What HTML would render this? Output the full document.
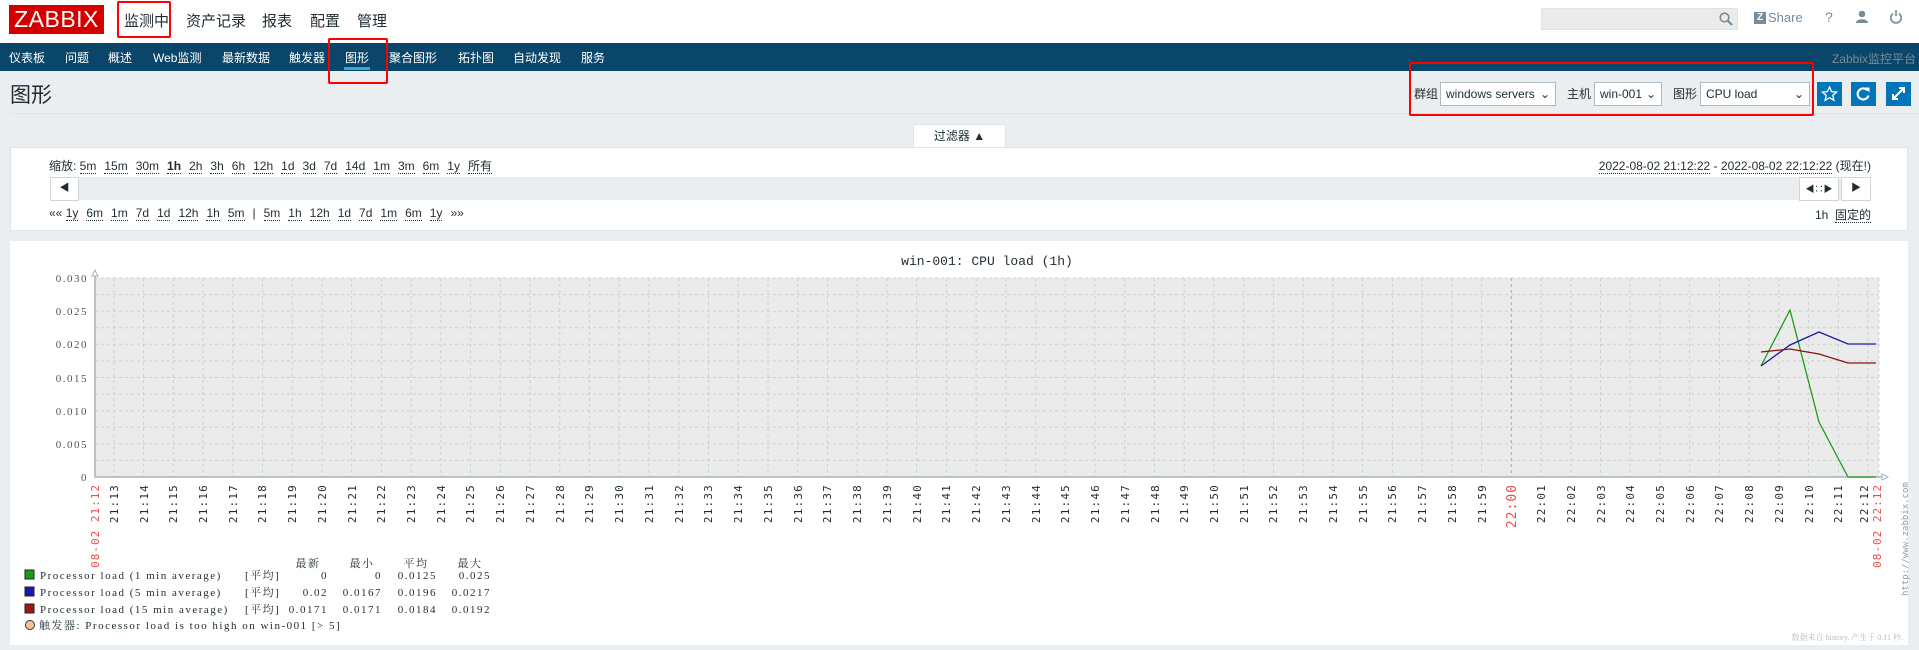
<!DOCTYPE html>
<html><head><meta charset="utf-8">
<style>
*{box-sizing:border-box;margin:0;padding:0}
body{width:1919px;height:650px;overflow:hidden;background:#ebeef0;font-family:"Liberation Sans","Noto Sans CJK SC",sans-serif;font-size:12px;color:#1f2c33;position:relative}
.abs{position:absolute}
#top{left:0;top:0;width:1919px;height:43px;background:#fff}
#logo{left:9px;top:5px;width:95px;height:29px;background:#d40000;color:#fff;font-size:23px;line-height:29px;text-align:center;letter-spacing:0.5px}
.mm{top:10px;font-size:15px;color:#1f2c33}
#nav{left:0;top:43px;width:1919px;height:28px;background:#0a466a}
.sn{top:49px;color:#fff;font-size:12px}
.red{border:2px solid #f00;border-radius:2px}
.sel{border:1px solid #acbbc2;background:#fff;height:24px;font-size:12px;line-height:22px;padding-left:5px}
.btn{width:25px;height:24px;background:#0275b8;top:82px}
.lnk{border-bottom:1px dotted #1f2c33}
.fr span{margin-right:8px}
</style></head><body>
<div id="top" class="abs"></div>
<div id="logo" class="abs">ZABBIX</div>
<div class="abs mm" style="left:124px">监测中</div>
<div class="abs mm" style="left:186px">资产记录</div>
<div class="abs mm" style="left:262px">报表</div>
<div class="abs mm" style="left:310px">配置</div>
<div class="abs mm" style="left:357px">管理</div>
<div class="abs red" style="left:117px;top:1px;width:54px;height:37px"></div>
<div class="abs" style="left:1541px;top:8px;width:197px;height:22px;background:#ebebeb;border:1px solid #dfe4e7"></div>
<svg class="abs" style="left:1719px;top:12px" width="14" height="14"><circle cx="5.5" cy="5.5" r="4.3" fill="none" stroke="#768d99" stroke-width="1.6"/><path d="M8.5 8.5l4.5 4.5" stroke="#768d99" stroke-width="2"/></svg>
<div class="abs" style="left:1754px;top:12px;width:12px;height:12px;background:#768d99;color:#fff;font-size:10px;font-weight:bold;line-height:12px;text-align:center">Z</div>
<div class="abs" style="left:1768px;top:10px;font-size:13px;color:#768d99">Share</div>
<div class="abs" style="left:1825px;top:9px;font-size:14px;color:#768d99">?</div>
<svg class="abs" style="left:1855px;top:10px" width="14" height="14"><circle cx="7" cy="4" r="3.3" fill="#768d99"/><path d="M1 13c0-5 12-5 12 0z" fill="#768d99"/></svg>
<svg class="abs" style="left:1889px;top:9px" width="14" height="15"><path d="M4 4.5a5.2 5.2 0 1 0 6 0" fill="none" stroke="#768d99" stroke-width="1.6"/><path d="M7 1v6" stroke="#768d99" stroke-width="1.6"/></svg>
<div id="nav" class="abs"></div>
<div class="abs sn" style="left:9px">仪表板</div>
<div class="abs sn" style="left:65px">问题</div>
<div class="abs sn" style="left:108px">概述</div>
<div class="abs sn" style="left:153px">Web监测</div>
<div class="abs sn" style="left:222px">最新数据</div>
<div class="abs sn" style="left:289px">触发器</div>
<div class="abs sn" style="left:345px">图形</div>
<div class="abs" style="left:344px;top:67px;width:26px;height:3px;background:#3ca5e0"></div>
<div class="abs sn" style="left:389px">聚合图形</div>
<div class="abs sn" style="left:458px">拓扑图</div>
<div class="abs sn" style="left:513px">自动发现</div>
<div class="abs sn" style="left:581px">服务</div>
<div class="abs red" style="left:328px;top:38px;width:60px;height:46px"></div>
<div class="abs" style="right:3px;top:50px;color:#768d99;font-size:12px">Zabbix监控平台</div>
<div class="abs" style="left:10px;top:79px;font-size:21px;color:#1f2c33">图形</div>
<div class="abs" style="left:10px;top:113px;width:1909px;height:1px;background:#dfe4e7"></div>
<div class="abs" style="left:1414px;top:85px">群组</div>
<div class="abs sel" style="left:1440px;top:82px;width:116px">windows servers <span style="float:right;margin-right:5px">⌄</span></div>
<div class="abs" style="left:1567px;top:85px">主机</div>
<div class="abs sel" style="left:1594px;top:82px;width:68px">win-001 <span style="float:right;margin-right:5px">⌄</span></div>
<div class="abs" style="left:1673px;top:85px">图形</div>
<div class="abs sel" style="left:1700px;top:82px;width:110px">CPU load <span style="float:right;margin-right:5px">⌄</span></div>
<div class="abs red" style="left:1409px;top:62px;width:405px;height:54px"></div>
<div class="abs btn" style="left:1817px"><svg width="25" height="24"><path d="M12.5 5l2.1 4.6 5 .5-3.8 3.3 1.1 4.9-4.4-2.6-4.4 2.6 1.1-4.9-3.8-3.3 5-.5z" fill="none" stroke="#fff" stroke-width="1.3"/></svg></div>
<div class="abs btn" style="left:1851px"><svg width="25" height="24"><path d="M16.5 8.5a5.5 5.5 0 1 0 1 5" fill="none" stroke="#fff" stroke-width="2.2"/><path d="M13.5 5.5h5v5z" fill="#fff"/></svg></div>
<div class="abs btn" style="left:1886px"><svg width="25" height="24"><path d="M7 17l11-11M13 6h5v5M7 12v5h5" fill="none" stroke="#fff" stroke-width="2"/></svg></div>
<div class="abs" style="left:913px;top:124px;width:93px;height:24px;background:#fff;border:1px solid #dfe4e7;border-bottom:none;text-align:center;line-height:22px">过滤器 ▲</div>
<div class="abs" style="left:10px;top:147px;width:1898px;height:84px;background:#fff;border:1px solid #dfe4e7"></div>
<div class="abs fr" style="left:49px;top:157px">缩放: <span class="lnk">5m</span><span class="lnk">15m</span><span class="lnk">30m</span><span class="lnk" style="font-weight:bold">1h</span><span class="lnk">2h</span><span class="lnk">3h</span><span class="lnk">6h</span><span class="lnk">12h</span><span class="lnk">1d</span><span class="lnk">3d</span><span class="lnk">7d</span><span class="lnk">14d</span><span class="lnk">1m</span><span class="lnk">3m</span><span class="lnk">6m</span><span class="lnk">1y</span><span class="lnk">所有</span></div>
<div class="abs" style="right:48px;top:157px"><span class="lnk">2022-08-02 21:12:22</span> - <span class="lnk">2022-08-02 22:12:22</span> (现在!)</div>
<div class="abs" style="left:50px;top:177px;width:1821px;height:23px;background:#ebeef0"></div>
<div class="abs" style="left:50px;top:177px;width:29px;height:24px;background:#fff;border:1px solid #cfd5d8;text-align:center;line-height:22px;font-size:10px">◀</div>
<div class="abs" style="left:1799px;top:177px;width:40px;height:24px;background:#fff;border:1px solid #cfd5d8;text-align:center;line-height:22px;font-size:9px">◀∷▶</div>
<div class="abs" style="left:1841px;top:177px;width:30px;height:24px;background:#fff;border:1px solid #cfd5d8;text-align:center;line-height:22px;font-size:10px">▶</div>
<div class="abs fr" style="left:49px;top:206px">«« <span class="lnk">1y</span><span class="lnk">6m</span><span class="lnk">1m</span><span class="lnk">7d</span><span class="lnk">1d</span><span class="lnk">12h</span><span class="lnk">1h</span><span class="lnk">5m</span><span>|</span><span class="lnk">5m</span><span class="lnk">1h</span><span class="lnk">12h</span><span class="lnk">1d</span><span class="lnk">7d</span><span class="lnk">1m</span><span class="lnk">6m</span><span class="lnk">1y</span>»»</div>
<div class="abs" style="right:48px;top:206px">1h &nbsp;<span class="lnk">固定的</span></div>
<div class="abs" style="left:10px;top:241px;width:1898px;height:404px;background:#fff"></div>
<svg class="abs" style="left:0;top:0" width="1919" height="650" font-family="'DejaVu Sans Mono',monospace">
<text x="987" y="265" text-anchor="middle" font-size="13" fill="#1f2c33" font-family="'Liberation Mono',monospace">win-001: CPU load (1h)</text>
<rect x="95" y="278" width="1784" height="199" fill="#ebebeb"/>
<g stroke="#c9d1d6" stroke-dasharray="3,3" stroke-width="1">
<path d="M95 278H1879M95 294.6H1879M95 311.2H1879M95 327.7H1879M95 344.3H1879M95 360.9H1879M95 377.5H1879M95 394.1H1879M95 410.7H1879M95 427.2H1879M95 443.8H1879M95 460.4H1879"/>
<path d="M113.8 278V477M143.6 278V477M173.3 278V477M203 278V477M232.8 278V477M262.5 278V477M292.2 278V477M322 278V477M351.7 278V477M381.4 278V477M411.2 278V477M440.9 278V477M470.6 278V477M500.4 278V477M530.1 278V477M559.8 278V477M589.6 278V477M619.3 278V477M649 278V477M678.8 278V477M708.5 278V477M738.2 278V477M768 278V477M797.7 278V477M827.4 278V477M857.2 278V477M886.9 278V477M916.6 278V477M946.4 278V477M976.1 278V477M1005.8 278V477M1035.6 278V477M1065.3 278V477M1095 278V477M1124.8 278V477M1154.5 278V477M1184.2 278V477M1214 278V477M1243.7 278V477M1273.4 278V477M1303.2 278V477M1332.9 278V477M1362.6 278V477M1392.4 278V477M1422.1 278V477M1451.8 278V477M1481.6 278V477M1541 278V477M1570.8 278V477M1600.5 278V477M1630.2 278V477M1660 278V477M1689.7 278V477M1719.4 278V477M1749.2 278V477M1778.9 278V477M1808.6 278V477M1838.4 278V477M1868 278V477M1879 278V477"/>
</g>
<path d="M1511.3 278V477" stroke="#aaa" stroke-dasharray="3,3"/>
<path d="M95 272V477H1884" stroke="#a5b3ba" fill="none" stroke-width="1.5"/>
<path d="M92 276l3-6 3 6z M1882 474l6 3-6 3z" fill="#fff" stroke="#a5b3ba"/>
<polyline points="1761,366 1790,310 1819,422 1848,477 1876,477" fill="none" stroke="#1a9e1a" stroke-width="1.3"/>
<polyline points="1761,366 1790,345 1819,332 1848,344 1876,344" fill="none" stroke="#1a1aa6" stroke-width="1.3"/>
<polyline points="1761,352 1790,349 1819,354 1848,363 1876,363" fill="none" stroke="#8c1010" stroke-width="1.3"/>
<g font-family="'Liberation Serif',serif" font-size="11" fill="#555" text-anchor="end" letter-spacing="1.5">
<text x="88" y="282">0.030</text><text x="88" y="315">0.025</text><text x="88" y="348">0.020</text><text x="88" y="382">0.015</text><text x="88" y="415">0.010</text><text x="88" y="448">0.005</text><text x="88" y="481">0</text>
</g>
<g font-size="11" fill="#1f2c33" text-anchor="end" letter-spacing="1.2">
<text transform="translate(118,484) rotate(-90)">21:13</text><text transform="translate(148,484) rotate(-90)">21:14</text><text transform="translate(177,484) rotate(-90)">21:15</text><text transform="translate(207,484) rotate(-90)">21:16</text><text transform="translate(237,484) rotate(-90)">21:17</text><text transform="translate(266,484) rotate(-90)">21:18</text><text transform="translate(296,484) rotate(-90)">21:19</text><text transform="translate(326,484) rotate(-90)">21:20</text><text transform="translate(356,484) rotate(-90)">21:21</text><text transform="translate(385,484) rotate(-90)">21:22</text><text transform="translate(415,484) rotate(-90)">21:23</text><text transform="translate(445,484) rotate(-90)">21:24</text><text transform="translate(474,484) rotate(-90)">21:25</text><text transform="translate(504,484) rotate(-90)">21:26</text><text transform="translate(534,484) rotate(-90)">21:27</text><text transform="translate(564,484) rotate(-90)">21:28</text><text transform="translate(593,484) rotate(-90)">21:29</text><text transform="translate(623,484) rotate(-90)">21:30</text><text transform="translate(653,484) rotate(-90)">21:31</text><text transform="translate(683,484) rotate(-90)">21:32</text><text transform="translate(712,484) rotate(-90)">21:33</text><text transform="translate(742,484) rotate(-90)">21:34</text><text transform="translate(772,484) rotate(-90)">21:35</text><text transform="translate(802,484) rotate(-90)">21:36</text><text transform="translate(831,484) rotate(-90)">21:37</text><text transform="translate(861,484) rotate(-90)">21:38</text><text transform="translate(891,484) rotate(-90)">21:39</text><text transform="translate(921,484) rotate(-90)">21:40</text><text transform="translate(950,484) rotate(-90)">21:41</text><text transform="translate(980,484) rotate(-90)">21:42</text><text transform="translate(1010,484) rotate(-90)">21:43</text><text transform="translate(1040,484) rotate(-90)">21:44</text><text transform="translate(1069,484) rotate(-90)">21:45</text><text transform="translate(1099,484) rotate(-90)">21:46</text><text transform="translate(1129,484) rotate(-90)">21:47</text><text transform="translate(1159,484) rotate(-90)">21:48</text><text transform="translate(1188,484) rotate(-90)">21:49</text><text transform="translate(1218,484) rotate(-90)">21:50</text><text transform="translate(1248,484) rotate(-90)">21:51</text><text transform="translate(1277,484) rotate(-90)">21:52</text><text transform="translate(1307,484) rotate(-90)">21:53</text><text transform="translate(1337,484) rotate(-90)">21:54</text><text transform="translate(1367,484) rotate(-90)">21:55</text><text transform="translate(1396,484) rotate(-90)">21:56</text><text transform="translate(1426,484) rotate(-90)">21:57</text><text transform="translate(1456,484) rotate(-90)">21:58</text><text transform="translate(1486,484) rotate(-90)">21:59</text><text transform="translate(1545,484) rotate(-90)">22:01</text><text transform="translate(1575,484) rotate(-90)">22:02</text><text transform="translate(1605,484) rotate(-90)">22:03</text><text transform="translate(1634,484) rotate(-90)">22:04</text><text transform="translate(1664,484) rotate(-90)">22:05</text><text transform="translate(1694,484) rotate(-90)">22:06</text><text transform="translate(1723,484) rotate(-90)">22:07</text><text transform="translate(1753,484) rotate(-90)">22:08</text><text transform="translate(1783,484) rotate(-90)">22:09</text><text transform="translate(1813,484) rotate(-90)">22:10</text><text transform="translate(1842,484) rotate(-90)">22:11</text><text transform="translate(1868,484) rotate(-90)">22:12</text>
</g>
<g fill="#f24949" text-anchor="end">
<text transform="translate(1516,484) rotate(-90)" font-size="13" letter-spacing="1">22:00</text>
<text transform="translate(99,484) rotate(-90)" font-size="11" letter-spacing="1">08-02 21:12</text>
<text transform="translate(1881,484) rotate(-90)" font-size="11" letter-spacing="1">08-02 22:12</text>
</g>
<text transform="translate(1908,596) rotate(-90)" font-size="9" fill="#999">http://www.zabbix.com</text>
<g font-family="'Liberation Serif','Noto Serif CJK SC',serif" font-size="11" fill="#1f2c33" letter-spacing="1.5">
<text x="308" y="567" text-anchor="middle">最新</text><text x="362" y="567" text-anchor="middle">最小</text><text x="416" y="567" text-anchor="middle">平均</text><text x="470" y="567" text-anchor="middle">最大</text>
<rect x="25" y="570" width="9" height="9" fill="#1a9e1a" stroke="#222"/><rect x="25" y="587" width="9" height="9" fill="#1a1aa6" stroke="#222"/><rect x="25" y="604" width="9" height="9" fill="#a01818" stroke="#222"/>
<text x="40" y="579">Processor load (1 min average)</text><text x="40" y="596">Processor load (5 min average)</text><text x="40" y="613">Processor load (15 min average)</text>
<text x="245" y="579">[平均]</text><text x="245" y="596">[平均]</text><text x="245" y="613">[平均]</text>
<g text-anchor="end"><text x="328" y="579">0</text><text x="382" y="579">0</text><text x="437" y="579">0.0125</text><text x="491" y="579">0.025</text>
<text x="328" y="596">0.02</text><text x="382" y="596">0.0167</text><text x="437" y="596">0.0196</text><text x="491" y="596">0.0217</text>
<text x="328" y="613">0.0171</text><text x="382" y="613">0.0171</text><text x="437" y="613">0.0184</text><text x="491" y="613">0.0192</text></g>
<circle cx="30" cy="625" r="4.5" fill="#f7c49a" stroke="#333"/>
<text x="39" y="629">触发器: Processor load is too high on win-001   [&gt; 5]</text>
</g>
<text x="1903" y="640" text-anchor="end" font-size="8" fill="#bbb" font-family="'Liberation Serif','Noto Serif CJK SC',serif">数据来自 history. 产生于 0.11 秒.</text>
</svg>
</body></html>
